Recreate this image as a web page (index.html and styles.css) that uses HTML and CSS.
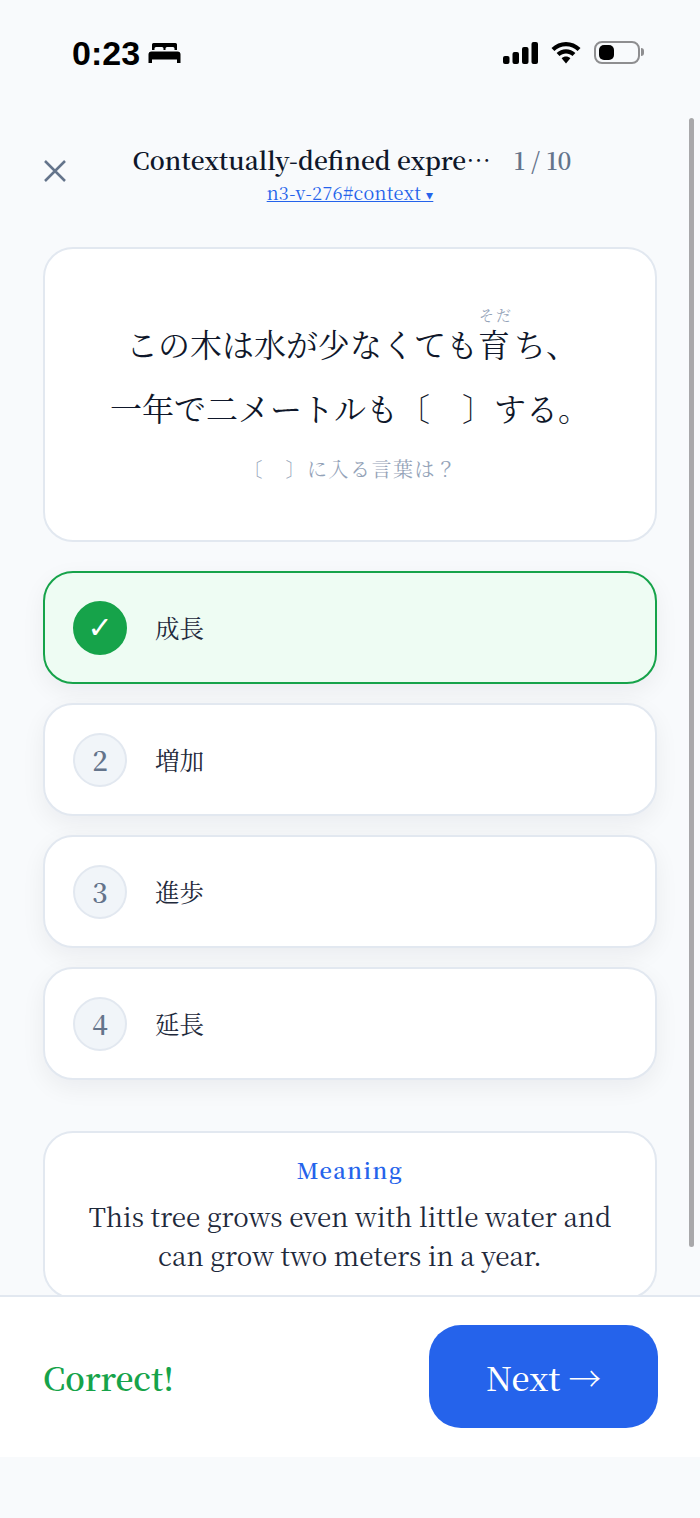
FILE: index.html
```html
<!DOCTYPE html>
<html lang="ja">
<head>
  <meta charset="UTF-8">
  <meta name="viewport" content="width=device-width, initial-scale=1.0">
  <title>Quiz</title>
  <link rel="stylesheet" href="styles.css">
</head>
<body>
  <div class="app">
    <div class="scrollbar"></div>

    <div class="status">
      <div class="status-left">
        <span class="time">0:23</span>
        <svg class="bed" width="33" height="20" viewBox="0 0 33 20">
          <path d="M4 1.500A1.500 1.500 0 0 1 5.500 0H27.500A1.500 1.500 0 0 1 29 1.500V7H26.500V5.500A1.500 1.500 0 0 0 25 4H19A1.500 1.500 0 0 0 17.500 5.500V7H15.500V5.500A1.500 1.500 0 0 0 14 4H8A1.500 1.500 0 0 0 6.500 5.500V7H4Z"/>
          <path d="M3.500 8.500H29.500A3 3 0 0 1 32.500 11.500V20H29V16.500H4V20H.5V11.500A3 3 0 0 1 3.500 8.500Z"/>
        </svg>
      </div>
      <div class="status-right">
        <svg class="signal" width="36" height="22" viewBox="0 0 36 22">
          <rect x="0" y="14" width="6.500" height="8" rx="2"/>
          <rect x="9.500" y="10" width="6.500" height="12" rx="2"/>
          <rect x="19" y="5" width="6.500" height="17" rx="2"/>
          <rect x="28.500" y="0" width="6.500" height="22" rx="2"/>
        </svg>
        <svg class="wifi" width="30" height="22" viewBox="0 0 30 22">
          <path d="M15 0C9.500 0 4.600 2.200 .5 6L3.400 9C6.500 5.900 10.500 4.200 15 4.200S23.500 5.900 26.600 9L29.500 6C25.400 2.200 20.500 0 15 0Z"/>
          <path d="M15 7.200C11.500 7.200 8.100 8.600 5.600 11L8.500 14C10.300 12.300 12.500 11.400 15 11.400S19.700 12.300 21.500 14L24.400 11C21.900 8.600 18.500 7.200 15 7.200Z"/>
          <path d="M15 14.500C13.400 14.500 11.800 15.100 10.600 16.200L15 21.500L19.400 16.200C18.200 15.100 16.600 14.500 15 14.500Z"/>
        </svg>
        <div class="battery"><div class="battery-level"></div></div>
      </div>
    </div>

    <div class="scroll">
      <div class="header">
        <svg class="close" width="24" height="24" viewBox="0 0 24 24">
          <path d="M2 2L22 22M22 2L2 22"/>
        </svg>
        <div class="header-center">
          <div class="title-row">
            <span class="title">Contextually-defined expre…</span>
            <span class="count">1 / 10</span>
          </div>
          <a class="ref-link" href="#">n3-v-276#context <span class="caret">▾</span></a>
        </div>
      </div>

      <div class="question">
        <p class="sentence sentence-furi">この木は水が少なくても<ruby class="furi">育<rt>そだ</rt></ruby>ち、</p>
        <p class="sentence">一年で二メートルも〔　〕する。</p>
        <p class="hint">〔　〕に入る言葉は？</p>
      </div>

      <div class="options">
        <div class="option correct"><span class="num">✓</span><span class="label">成長</span></div>
        <div class="option"><span class="num">2</span><span class="label">増加</span></div>
        <div class="option"><span class="num">3</span><span class="label">進歩</span></div>
        <div class="option"><span class="num">4</span><span class="label">延長</span></div>
      </div>

      <div class="meaning">
        <div class="meaning-title">Meaning</div>
        <p class="meaning-text">This tree grows even with little water and can grow two meters in a year.</p>
      </div>
    </div>

    <div class="footer">
      <span class="result">Correct!</span>
      <button class="next">Next →</button>
    </div>
  </div>
</body>
</html>
```

FILE: styles.css
```css
* {
  box-sizing: border-box;
}
body {
  margin: 0;
  background: #f8fafc;
  font-family: "Noto Serif CJK JP", "Liberation Serif", "Noto Sans CJK JP", serif;
  color: #0f172a;
}
p {
  margin: 0;
}
.app {
  position: relative;
  height: 1518px;
  overflow: hidden;
}
.scrollbar {
  position: absolute;
  top: 118px;
  right: 6px;
  width: 5px;
  height: 1129px;
  border-radius: 3px;
  background: #a8a8aa;
  z-index: 2;
}

/* status bar */
.status {
  height: 100px;
  padding: 41px 60px 0 72px;
  display: flex;
  justify-content: space-between;
  align-items: flex-start;
}
.status-left {
  display: flex;
  align-items: center;
  gap: 8px;
}
.time {
  font-family: "Liberation Sans", sans-serif;
  font-weight: 700;
  font-size: 34px;
  line-height: 24px;
  color: #000;
}
.status-right {
  display: flex;
  align-items: center;
  gap: 13px;
  height: 23px;
}
.signal {
  margin-right: -1px;
}
.battery {
  position: relative;
  width: 46px;
  height: 23px;
  padding: 2px 3px;
  border: 2px solid #8e8e90;
  border-radius: 8px;
}
.battery::after {
  content: "";
  position: absolute;
  right: -6px;
  top: 5px;
  width: 3px;
  height: 8px;
  border-radius: 0 3px 3px 0;
  background: #8e8e90;
}
.battery-level {
  width: 15px;
  height: 100%;
  border-radius: 5px;
  background: #000;
}

/* scrolling part */
.scroll {
  height: 1195px;
  overflow: hidden;
  padding: 41px 43px 0;
}
.header {
  display: flex;
  align-items: flex-start;
  height: 106px;
}
.close {
  flex: none;
  margin-top: 18px;
}
.close path {
  stroke: #64748b;
  stroke-width: 2.500;
  fill: none;
}
.header-center {
  flex: 1;
  display: flex;
  flex-direction: column;
  align-items: center;
  padding-right: 24px;
}
.title-row {
  display: flex;
  align-items: center;
  gap: 23px;
  height: 36px;
  padding-left: 4px;
}
.title {
  font-size: 24.600px;
  font-weight: 600;
  color: #0f172a;
}
.count {
  font-size: 24px;
  font-weight: 600;
  color: #64748b;
}
.ref-link {
  margin-top: 2px;
  font-size: 18px;
  line-height: 26px;
  letter-spacing: 0.300px;
  color: #2563eb;
}
.caret {
  font-size: 14px;
}

.question {
  height: 295px;
  padding-top: 62px;
  background: #fff;
  border: 2px solid #e2e8f0;
  border-radius: 30px;
  text-align: center;
}
.sentence {
  font-size: 32px;
  line-height: 64px;
  height: 64px;
  color: #0f172a;
}
.sentence-furi {
  padding-left: 4px;
}
.furi {
  display: inline-block;
  position: relative;
  padding-right: 4px;
}
.furi rt {
  display: block;
  position: absolute;
  top: -3px;
  left: 1px;
  font-size: 15px;
  line-height: 14px;
  letter-spacing: 2px;
  white-space: nowrap;
  color: #94a3b8;
}
.hint {
  margin-top: 14px;
  font-size: 20px;
  line-height: 32px;
  letter-spacing: 1.500px;
  color: #94a3b8;
}

.options {
  margin-top: 29px;
  display: flex;
  flex-direction: column;
  gap: 19px;
}
.option {
  height: 113px;
  padding: 0 28px;
  display: flex;
  align-items: center;
  gap: 28px;
  background: #fff;
  border: 2px solid #e2e8f0;
  border-radius: 30px;
  box-shadow: 0 8px 24px rgba(15, 23, 42, 0.06);
}
.option.correct {
  background: #eefcf3;
  border-color: #16a34a;
}
.num {
  flex: none;
  width: 54px;
  height: 54px;
  display: flex;
  align-items: center;
  justify-content: center;
  background: #f1f5f9;
  border: 2px solid #e2e8f0;
  border-radius: 50%;
  font-size: 27px;
  font-weight: 600;
  color: #64748b;
}
.correct .num {
  background: #16a34a;
  border-color: #16a34a;
  color: #fff;
  font-family: "DejaVu Sans", sans-serif;
  font-size: 30px;
  font-weight: 700;
}
.label {
  font-size: 24.500px;
  color: #1e293b;
}

.meaning {
  margin-top: 51px;
  height: 168px;
  padding-top: 22px;
  background: #fff;
  border: 2px solid #e2e8f0;
  border-radius: 30px;
  text-align: center;
}
.meaning-title {
  font-size: 22px;
  line-height: 30px;
  font-weight: 600;
  letter-spacing: 1.500px;
  color: #2563eb;
}
.meaning-text {
  margin-top: 11px;
  padding: 0 40px;
  font-size: 26px;
  line-height: 39px;
  color: #1e293b;
}

.footer {
  height: 162px;
  padding: 0 42px 2px 43px;
  display: flex;
  align-items: center;
  justify-content: space-between;
  background: #fff;
  border-top: 2px solid #e2e8f0;
}
.result {
  margin-top: 2px;
  font-size: 32px;
  font-weight: 600;
  color: #16a34a;
}
.next {
  width: 229px;
  height: 103px;
  padding-top: 2px;
  border: none;
  border-radius: 32px;
  background: #2563eb;
  color: #fff;
  font-family: inherit;
  font-size: 32.500px;
  font-weight: 500;
  cursor: pointer;
}
```
